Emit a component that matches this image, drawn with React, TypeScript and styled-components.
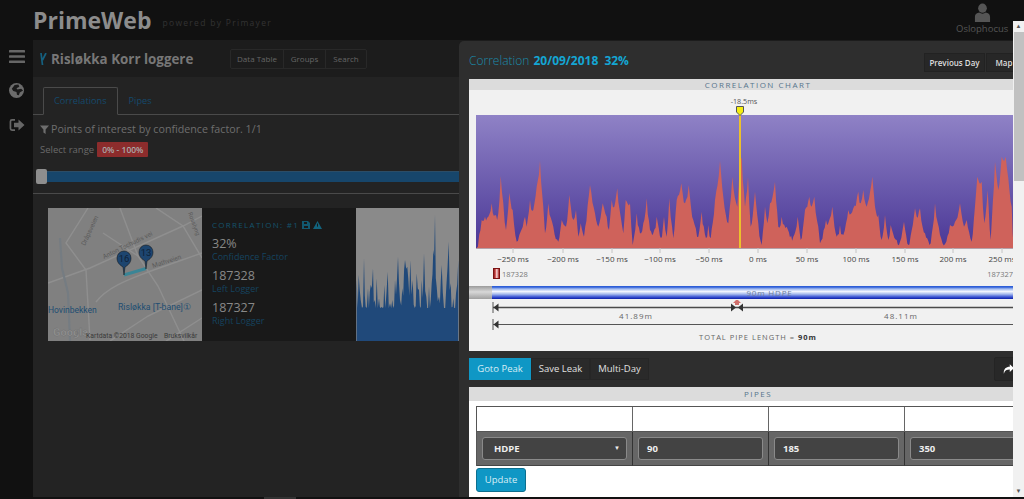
import React from "react";
import styled, { createGlobalStyle } from "styled-components";

const Global = createGlobalStyle`
  html, body { margin: 0; padding: 0; height: 100%; background: #111; overflow: hidden; }
  body { font-family: "Open Sans", "Liberation Sans", sans-serif; }
  * { box-sizing: border-box; }
`;

const Page = styled.div`
  position: relative;
  width: 1024px;
  height: 499px;
  overflow: hidden;
  display: grid;
  grid-template-columns: 33px 1fr;
  grid-template-rows: 40px 457px 2px;
  background: #111;
`;

const Header = styled.header`
  grid-column: 1 / 3;
  display: flex;
  align-items: flex-start;
  padding-left: 33px;
`;
const Brand = styled.div`
  font-size: 23px;
  font-weight: 700;
  line-height: 33px;
  height: 40px;
  padding-top: 4px;
  color: #8c8c8c;
`;
const Powered = styled.div`
  margin: 17px 0 0 11px;
  font-size: 8.5px;
  line-height: 12px;
  letter-spacing: 1.3px;
  color: #333;
`;
const UserBox = styled.div`
  margin-left: auto;
  width: 68px;
  display: flex;
  flex-direction: column;
  align-items: flex-start;
  padding: 3px 0 0 0;
  color: #555;
  font-size: 9.5px;
  line-height: 13px;
  svg { margin-left: 18px; }
`;

const Sidebar = styled.nav`
  display: flex;
  flex-direction: column;
  align-items: center;
  gap: 20px;
  padding-top: 10px;
  color: #666;
`;

const Main = styled.main`
  background: #232323;
  min-width: 0;
  overflow: hidden;
`;
const FootStrip = styled.div`
  grid-column: 1 / 3;
  padding-left: 264px;
`;
const FootTab = styled.div`
  width: 32px;
  height: 2px;
  background: #333;
`;
const TopBar = styled.div`
  height: 37px;
  background: #1c1c1c;
  display: flex;
  align-items: center;
  padding-left: 7px;
`;
const PageTitle = styled.h1`
  margin: 0;
  font-size: 13.4px;
  font-weight: 700;
  color: #777;
  display: flex;
  align-items: center;
  gap: 4px;
  width: 190px;
`;
const TopButtons = styled.div`
  display: flex;
  border: 1px solid #282828;
  border-radius: 2px;
`;
const TopButton = styled.div<{ $w: number }>`
  width: ${(p) => p.$w}px;
  text-align: center;
  font-size: 8px;
  line-height: 18px;
  color: #666;
  & + & { border-left: 1px solid #282828; }
`;
const Tabs = styled.div`
  margin-top: 10px;
  height: 28px;
  display: flex;
  padding-left: 10px;
  border-bottom: 1px solid #4a4a4a;
`;
const Tab = styled.div<{ $active?: boolean }>`
  height: 28px;
  padding: 0 10px 0 10px;
  font-size: 9.2px;
  line-height: 26px;
  color: #15496b;
  border: 1px solid ${(p) => (p.$active ? "#4a4a4a" : "transparent")};
  border-bottom-color: ${(p) => (p.$active ? "#232323" : "transparent")};
  border-radius: 2px 2px 0 0;
`;
const FilterLine = styled.div`
  margin: 6px 0 0 7px;
  display: flex;
  align-items: center;
  gap: 2px;
  color: #6e6e6e;
  font-size: 10.7px;
  line-height: 16px;
`;
const RangeLine = styled.div`
  margin: 5px 0 0 7px;
  display: flex;
  align-items: center;
  gap: 3px;
  color: #6a6a6a;
  font-size: 9.5px;
  line-height: 15px;
`;
const RangeBadge = styled.span`
  background: #8c2c2c;
  color: #aaa;
  font-size: 8.5px;
  font-weight: 600;
  padding: 0 5px;
  line-height: 15px;
  border-radius: 1px;
`;
const SliderTrack = styled.div`
  position: relative;
  margin: 14px 0 0 3px;
  height: 11px;
  background: #17466b;
  border-top: 1px solid #2c4d66;
`;
const SliderHandle = styled.div`
  position: absolute;
  left: 0;
  top: -3px;
  width: 11px;
  height: 15px;
  background: #8e8e8e;
  border-radius: 2px;
`;
const Rule = styled.div`
  margin-top: 11px;
  height: 1px;
  background: #4a4a4a;
`;
const Card = styled.section`
  margin: 14px 0 0 15px;
  height: 133px;
  display: flex;
  background: #191919;
  width: 500px;
`;
const MapBox = styled.div`
  width: 154px;
  flex: none;
  svg { display: block; }
`;
const Info = styled.div`
  width: 154px;
  flex: none;
  padding: 11px 0 0 10px;
`;
const InfoTitle = styled.div`
  display: flex;
  align-items: center;
  gap: 3px;
  font-size: 8px;
  line-height: 12px;
  letter-spacing: 1.3px;
  color: #15536b;
  margin-bottom: 4px;
`;
const Stat = styled.div`
  color: #888;
  font-size: 12.5px;
  line-height: 15px;
  padding-top: 1px;
`;
const StatLabel = styled.div`
  color: #15435f;
  font-size: 9px;
  line-height: 12px;
  margin-bottom: 4px;
`;
const Spectrum = styled.div`
  flex: none;
  width: 103px;
  height: 133px;
  svg { display: block; }
`;

const Overlay = styled.aside`
  position: absolute;
  left: 459px;
  right: 0;
  top: 21px;
  bottom: 2px;
  display: flex;
`;
const Modal = styled.div`
  flex: 1;
  min-width: 0;
  margin-top: 20px;
  background: #2e2e2e;
  border-radius: 5px 0 0 0;
  overflow: hidden;
`;
const ModalInner = styled.div`
  width: 588px;
  padding-left: 10px;
`;
const TitleRow = styled.div`
  height: 38px;
  display: flex;
  align-items: flex-start;
  padding-right: 25px;
`;
const ModalTitle = styled.h2`
  margin: 10px 0 0 0;
  font-size: 12px;
  line-height: 19px;
  font-weight: 300;
  color: #1a8cab;
  b { font-weight: 700; color: #14a6d4; margin-left: 1px; word-spacing: 3px; }
`;
const DarkGroup = styled.div`
  display: flex;
  margin-left: auto;
`;
const HeadButton = styled.button<{ $w: number }>`
  width: ${(p) => p.$w}px;
  height: 19px;
  margin-top: 12px;
  padding: 0;
  background: #272727;
  border: 1px solid #222;
  color: #ddd;
  font: 600 8px/17px "Open Sans", sans-serif;
  & + & { margin-left: 1px; }
`;
const WhitePanel = styled.section`
  background: #f1f1f1;
  width: 578px;
  height: 272px;
`;
const SectionHead = styled.div<{ $tall?: boolean }>`
  height: ${(p) => (p.$tall ? "14px" : "11px")};
  background: #dcdcdc;
  text-align: center;
  font-size: 8px;
  line-height: ${(p) => (p.$tall ? "14px" : "12px")};
  letter-spacing: 1.5px;
  color: #56748c;
`;
const ChartSvg = styled.svg`
  display: block;
`;
const LoggerRow = styled.div`
  height: 13px;
  margin-top: 1px;
  display: flex;
  align-items: center;
  justify-content: space-between;
  padding: 0 34px 0 24px;
  font-size: 7.5px;
  color: #777;
`;
const LoggerLeft = styled.span`
  display: flex;
  align-items: center;
  gap: 2px;
`;
const LoggerBattery = styled.i`
  display: block;
  width: 7px;
  height: 11px;
  background: linear-gradient(90deg, #8e1a1a, #e06a6a 35%, #f6dede 55%, #a52020);
  border: 1px solid #7a1212;
`;
const PipeBar = styled.div`
  margin-top: 6px;
  height: 13px;
  display: flex;
`;
const PipeCap = styled.div`
  width: 23px;
  background: linear-gradient(180deg, #9a9a9a, #d8d8d8 45%, #a0a0a0);
`;
const PipeBody = styled.div`
  flex: 1;
  background: linear-gradient(180deg, #2d5ed8 0, #2d5ed8 8%, #9cb6ee 22%, #f2f5fd 42%, #a8bcee 62%, #3b55d4 84%, #0c1fa8 100%);
  text-align: center;
  font-size: 8px;
  line-height: 13px;
  letter-spacing: 0.8px;
  color: #6d7e9c;
`;
const DimensionSvg = styled.svg`
  display: block;
  margin-top: 1px;
`;
const TotalLine = styled.div`
  text-align: center;
  font-size: 7.5px;
  line-height: 12px;
  letter-spacing: 1px;
  color: #666;
  b { font-weight: 700; color: #333; }
`;
const ActionRow = styled.div`
  height: 36px;
  display: flex;
  align-items: flex-start;
  padding-top: 7px;
  width: 578px;
`;
const ActionButton = styled.button<{ $primary?: boolean }>`
  height: 22px;
  padding: 0;
  width: ${(p) => (p.$primary ? 62 : 59)}px;
  background: ${(p) => (p.$primary ? "#0f97c5" : "#2a2a2a")};
  border: 1px solid ${(p) => (p.$primary ? "#0f97c5" : "#262626")};
  color: ${(p) => (p.$primary ? "#d8eef6" : "#e0e0e0")};
  font: 400 9.5px/20px "Open Sans", sans-serif;
`;
const ShareButton = styled.button`
  margin-left: auto;
  margin-right: 27px;
  width: 26px;
  height: 24px;
  margin-top: -1px;
  background: #282828;
  border: 1px solid #242424;
  border-radius: 2px;
  color: #fff;
  padding: 0 0 0 8px;
  text-align: left;
  svg { display: block; }
`;
const PipesPanel = styled.section`
  background: #fff;
  width: 578px;
  height: 110px;
`;
const PipesBody = styled.div`
  padding: 5px 7px 0;
`;
const PipeTable = styled.div`
  display: grid;
  grid-template-columns: 156px 136px 136px 136px;
  grid-template-rows: 25px 34px;
  border-top: 1px solid #555;
  border-left: 1px solid #555;
  width: 564px;
`;
const HeadCell = styled.div`
  background: #fff;
  border-right: 1px solid #666;
  border-bottom: 1px solid #555;
`;
const BodyCell = styled.div`
  background: #666;
  border-right: 1px solid #333;
  border-bottom: 1px solid #444;
  padding: 5px 5px 0;
`;
const FieldBox = styled.div`
  height: 23px;
  background: #434343;
  border: 1px solid #8a8a8a;
  border-radius: 3px;
  color: #eee;
  font-size: 9.5px;
  font-weight: 700;
  line-height: 21px;
  padding-left: 8px;
`;
const SelectBox = styled(FieldBox)`
  display: flex;
  justify-content: space-between;
  padding: 0 6px 0 11px;
  span { font-size: 6px; }
`;
const UpdateButton = styled.button`
  display: block;
  margin-top: 2px;
  width: 50px;
  height: 24px;
  padding: 0;
  background: #0f97c5;
  border: 1px solid #0c6f8f;
  border-radius: 3px;
  color: #d6eef6;
  font: 400 9.5px/22px "Open Sans", sans-serif;
`;
const Scrollbar = styled.div`
  flex: none;
  width: 11px;
  background: #f1f1f1;
  display: flex;
  flex-direction: column;
  align-items: center;
  color: #555;
  font-size: 6px;
  line-height: 11px;
`;
const ScrollThumb = styled.div`
  width: 10px;
  height: 149px;
  background: #c1c1c1;
  margin-bottom: auto;
`;
const Spacer = styled.div`
  height: 11px;
`;

/* Peak outlines traced from the correlation chart. */
const LEFT: number[][] = [[50,385],[65,300],[75,290],[85,290],[95,250],[105,285],[115,280],[122,168],[130,250],[138,330],[148,218],[158,270],[170,365],[178,345],[195,290],[200,320],[210,240],[220,270],[240,122],[250,260],[255,340],[265,250],[280,320],[295,365],[305,300],[318,320],[328,225],[340,300],[348,270],[355,350],[362,310],[372,350],[390,195],[405,280],[415,320],[428,250],[440,290],[447,330],[455,240],[463,260],[472,205],[482,290],[490,340],[497,240],[510,250],[518,375],[530,280],[540,340],[550,310],[560,235],[570,330],[580,340],[590,290],[603,355],[612,290],[620,350],[628,235],[640,355],[650,240],[664,190],[675,250],[686,195],[700,300],[715,350],[725,275],[738,355],[745,315],[752,355],[765,240],[780,122],[790,230],[805,310],[817,170],[832,260],[840,115]];
const RIGHT: number[][] = [[5,115],[15,260],[24,170],[32,320],[45,215],[55,310],[65,375],[75,260],[82,310],[90,250],[105,185],[115,320],[125,290],[140,320],[160,350],[173,290],[182,360],[195,270],[208,230],[215,260],[223,230],[235,320],[240,370],[258,300],[265,310],[277,260],[290,350],[300,315],[310,345],[318,310],[325,270],[340,265],[355,215],[362,250],[370,210],[380,260],[397,170],[405,260],[415,285],[425,360],[435,285],[445,360],[452,315],[470,360],[480,365],[492,305],[505,375],[525,265],[530,290],[540,265],[555,340],[572,370],[585,250],[600,345],[615,372],[630,315],[645,305],[660,250],[672,320],[680,300],[695,365],[712,170],[725,185],[733,310],[743,210],[752,360],[765,125],[775,210],[785,110],[797,110],[805,175],[815,260],[821,385]];
const SPEC: number[][] = [[470,240],[476,225],[482,300],[486,350],[492,175],[497,320],[504,265],[512,255],[519,205],[524,300],[530,235],[537,295],[545,320],[553,255],[563,215],[570,310],[577,300],[585,240],[594,170],[600,300],[607,265],[615,180],[622,200],[631,180],[638,240],[644,330],[650,220],[657,270],[665,240],[672,160],[679,290],[687,260],[695,250],[700,150],[705,45],[710,260],[717,290],[725,195],[732,335],[739,260],[746,125],[752,250],[760,295],[768,280],[775,180]];

const noise = (i: number) => {
  const v = Math.sin(i * 12.9898) * 43758.5453;
  return v - Math.floor(v);
};

/* Subdivide an outline and push it towards the base by a repeatable amount, for the fine jagged edge. */
const jag = (pts: number[][], step: number, amp: number, floor: number) => {
  const out: number[][] = [];
  let n = 0;
  for (let i = 0; i < pts.length - 1; i++) {
    const [x0, y0] = pts[i];
    const [x1, y1] = pts[i + 1];
    const count = Math.max(1, Math.round((x1 - x0) / step));
    for (let k = 0; k < count; k++) {
      const t = k / count;
      const y = y0 + (y1 - y0) * t;
      const drop = k === 0 ? 0 : amp * noise(++n);
      out.push([x0 + (x1 - x0) * t, Math.min(floor, y + drop)]);
    }
  }
  out.push(pts[pts.length - 1]);
  return out;
};
const fmt = (pts: number[][]) => pts.map(([x, y]) => `${x.toFixed(1)},${y.toFixed(1)}`).join(" ");

const chartPoints = fmt(
  jag(
    [
      ...LEFT.map(([x, y]) => [460 + x / 3 - 469, 120 + y / 3 - 90]),
      ...RIGHT.map(([x, y]) => [740 + x / 3 - 469, 120 + y / 3 - 90]),
    ],
    1.2,
    6,
    158
  )
);

const specPoints = fmt([
  ...jag(SPEC.map(([x, y]) => [(x - 468) / 3, (y - 24) / 3]), 1, 34, 100),
  [102.3, 133],
  [0.6, 133],
]);

const TICKS = [
  ["\u2212250 ms", 44], ["\u2212200 ms", 94], ["\u2212150 ms", 143], ["\u2212100 ms", 191], ["\u221250 ms", 240],
  ["0 ms", 289], ["50 ms", 338], ["100 ms", 387], ["150 ms", 436], ["200 ms", 484], ["250 ms", 533],
] as const;

const Pin = ({ x, y, n }: { x: number; y: number; n: string }) => (
  <g transform={`translate(${x} ${y})`}>
    <path d="M0 0 L-1 -8 C-6 -11 -7 -14 -7 -17 A7 7 0 0 1 7 -17 C7 -14 6 -11 1 -8 Z" fill="#1d456f" stroke="#111" strokeWidth="0.5" />
    <text x="0" y="-13" textAnchor="middle" fontSize="9.5" fill="#0f2238">{n}</text>
  </g>
);

const MapDrawing = () => (
  <svg width="154" height="133" viewBox="0 0 154 133" fontFamily="Roboto, sans-serif">
    <rect width="154" height="133" fill="#808080" />
    <g fill="none" stroke="#8f8f8f" strokeWidth="1.4">
      <path d="M0 75 L42 60 L135 18 L154 8" />
      <path d="M40 0 L18 35 L38 62 L42 132" />
      <path d="M72 0 L90 48 L110 78 L136 133" />
      <path d="M48 94 C60 78 85 70 100 64 L154 45" />
      <path d="M62 133 L100 108 L154 82" />
      <path d="M118 133 L154 110" />
      <path d="M108 0 L135 18 L154 50" />
      <path d="M55 25 L90 48" />
    </g>
    <path d="M12 30 L14 60 L20 85 L22 133" fill="none" stroke="#757c82" strokeWidth="2.2" />
    <path d="M76 67 L98 60.5" stroke="#3a8596" strokeWidth="3" />
    <text fontSize="6.5" fill="#5b5b5b" transform="translate(37 38) rotate(-65)">Dr&#229;psveien</text>
    <text fontSize="6.5" fill="#5b5b5b" transform="translate(56 51) rotate(-26)">Anton Tschudis vei</text>
    <text fontSize="6.5" fill="#5b5b5b" transform="translate(105 60) rotate(-18)">Mathveien</text>
    <text fontSize="6" fill="#5b5b5b" transform="translate(140 5) rotate(70)">Rosslyng</text>
    <Pin x={76} y={67} n="16" />
    <Pin x={98} y={61} n="13" />
    <text x="0" y="105" fontSize="8.5" fill="#1d4d72">Hovinbekken</text>
    <text x="70" y="102" fontSize="8.7" fill="#1d4d72">Risl&#248;kka [T-bane]&#9312;</text>
    <text x="5" y="128" fontSize="11" fontWeight="700" fill="#949494" stroke="#6e6e6e" strokeWidth="0.4">Google</text>
    <text x="38" y="130" fontSize="6.8" fill="#3a3a3a">Kartdata &#169;2018 Google</text>
    <text x="116" y="130" fontSize="6.8" fill="#3a3a3a">Bruksvilk&#229;r</text>
  </svg>
);

const MenuIcon = () => (
  <svg width="16" height="13" viewBox="0 0 16 13" fill="currentColor"><rect y="0" width="16" height="2.6" rx=".6" /><rect y="5.2" width="16" height="2.6" rx=".6" /><rect y="10.4" width="16" height="2.6" rx=".6" /></svg>
);
const GlobeIcon = () => (
  <svg width="15" height="15" viewBox="0 0 16 16">
    <circle cx="8" cy="8" r="8" fill="#6c6c6c" />
    <path d="M6 2 L10 1.5 L11 4 L8 5.5 L9 7 L13 6 L15 8 L11.5 10 L10.5 13 L8.5 12.5 L8 9.5 L4.5 8.5 L3 6 Z" fill="#1a1a1a" />
  </svg>
);
const ExitIcon = () => (
  <svg width="16" height="14" viewBox="0 0 16 14" fill="currentColor">
    <path d="M6 1 H3 A2.4 2.4 0 0 0 .6 3.4 V10.6 A2.4 2.4 0 0 0 3 13 H6 V11.3 H3 A.8 .8 0 0 1 2.3 10.5 V3.5 A.8 .8 0 0 1 3 2.7 H6 Z" />
    <path d="M9.5 1.5 L15.5 7 L9.5 12.5 V9.3 H5 V4.7 H9.5 Z" />
  </svg>
);
const UserIcon = () => (
  <svg width="17" height="19" viewBox="0 0 18 19" fill="#555" preserveAspectRatio="none">
    <circle cx="9" cy="5.2" r="4.6" />
    <path d="M1 19 V14 C1 11 3.5 9.8 5.5 9.5 C7.5 11 10.5 11 12.5 9.5 C14.5 9.8 17 11 17 14 V19 Z" />
  </svg>
);
const FilterIcon = () => (
  <svg width="9" height="9" viewBox="0 0 9 9" fill="#6e6e6e"><path d="M0 .5 H9 L5.6 4.4 V9 L3.4 7.5 V4.4 Z" /></svg>
);
const Valve = () => (
  <svg width="7" height="12" viewBox="0 0 7 12" fill="none" stroke="#15607f" strokeWidth="1.7"><path d="M1 0 L2.5 12 M6 0 L2.5 7" /></svg>
);
const SaveIcon = () => (
  <svg width="8" height="8" viewBox="0 0 8 8" fill="#12586f"><path d="M0 0 H6 L8 2 V8 H0 Z M2 1 V3 H5 V1 Z M2 5 V7 H6 V5 Z" fillRule="evenodd" /></svg>
);
const WarnIcon = () => (
  <svg width="9" height="8" viewBox="0 0 9 8"><path d="M4.5 0 L9 8 H0 Z" fill="#12637d" /><rect x="4" y="2.6" width="1" height="3" fill="#191919" /></svg>
);
const ShareIcon = () => (
  <svg width="11" height="10" viewBox="0 0 13 11" fill="#fff"><path d="M8 0 L13 4.5 L8 9 V6.2 C4.5 6.2 2.2 7.2 1 11 C0.4 6 3 2.9 8 2.8 Z" /></svg>
);

const Arrow = ({ x, dir, y = 7.5 }: { x: number; dir: 1 | -1; y?: number }) => (
  <path d={`M${x} ${y} L${x + dir * 5} ${y - 4} V${y + 4} Z`} fill="#333" />
);

export default function App() {
  return (
    <Page>
      <Global />
      <Header>
        <Brand>PrimeWeb</Brand>
        <Powered>powered by Primayer</Powered>
        <UserBox>
          <UserIcon />
          <span>Oslophocus</span>
        </UserBox>
      </Header>
      <Sidebar>
        <MenuIcon />
        <GlobeIcon />
        <ExitIcon />
      </Sidebar>
      <Main>
        <TopBar>
          <PageTitle><Valve /> Risl&#248;kka Korr loggere</PageTitle>
          <TopButtons>
            <TopButton $w={52}>Data Table</TopButton>
            <TopButton $w={42}>Groups</TopButton>
            <TopButton $w={41}>Search</TopButton>
          </TopButtons>
        </TopBar>
        <Tabs>
          <Tab $active>Correlations</Tab>
          <Tab>Pipes</Tab>
        </Tabs>
        <FilterLine><FilterIcon /> Points of interest by confidence factor. 1/1</FilterLine>
        <RangeLine>Select range <RangeBadge>0% - 100%</RangeBadge></RangeLine>
        <SliderTrack><SliderHandle /></SliderTrack>
        <Rule />
        <Card>
          <MapBox><MapDrawing /></MapBox>
          <Info>
            <InfoTitle>CORRELATION: #1 <SaveIcon /> <WarnIcon /></InfoTitle>
            <Stat>32%</Stat>
            <StatLabel>Confidence Factor</StatLabel>
            <Stat>187328</Stat>
            <StatLabel>Left Logger</StatLabel>
            <Stat>187327</Stat>
            <StatLabel>Right Logger</StatLabel>
          </Info>
          <Spectrum>
            <svg width="103" height="133" viewBox="0 0 103 133">
              <rect width="103" height="133" fill="#8a8a8a" />
              <polygon points={specPoints} fill="#20497a" />
            </svg>
          </Spectrum>
        </Card>
      </Main>
      <FootStrip><FootTab /></FootStrip>

      <Overlay>
        <Modal>
          <ModalInner>
            <TitleRow>
              <ModalTitle>Correlation <b>20/09/2018 32%</b></ModalTitle>
              <DarkGroup>
                <HeadButton $w={61}>Previous Day</HeadButton>
                <HeadButton $w={36}>Map</HeadButton>
              </DarkGroup>
            </TitleRow>
            <WhitePanel>
              <SectionHead>CORRELATION CHART</SectionHead>
              <ChartSvg width="578" height="176" viewBox="0 0 578 176" fontFamily="Open Sans, sans-serif">
                <defs>
                  <linearGradient id="bg" x1="0" y1="0" x2="0" y2="1">
                    <stop offset="0" stopColor="#8f82c6" />
                    <stop offset="1" stopColor="#4a3796" />
                  </linearGradient>
                </defs>
                <rect x="7" y="25" width="571" height="133" fill="url(#bg)" />
                <polygon points={chartPoints} fill="#cf625b" />
                <line x1="7" y1="158.5" x2="578" y2="158.5" stroke="#b5a0a8" />
                <line x1="271" y1="25" x2="271" y2="158" stroke="#ecc02c" strokeWidth="2" />
                <path d="M267.5 16.5 H274.5 V22 L271 25.5 L267.5 22 Z" fill="#f5ee10" stroke="#555" strokeWidth="1" />
                <text x="275" y="14" textAnchor="middle" fontSize="7.2" fill="#555">-18.5ms</text>
                {TICKS.map(([label, x]) => (
                  <g key={label}>
                    <line x1={x} y1="158" x2={x} y2="163" stroke="#c4c4c4" />
                    <text x={x} y="172" textAnchor="middle" fontSize="8" fill="#444">{label}</text>
                  </g>
                ))}
              </ChartSvg>
              <LoggerRow>
                <LoggerLeft><LoggerBattery />187328</LoggerLeft>
                <span>187327</span>
              </LoggerRow>
              <PipeBar>
                <PipeCap />
                <PipeBody>90m HDPE</PipeBody>
              </PipeBar>
              <DimensionSvg width="578" height="31" viewBox="0 0 578 31" fontFamily="Open Sans, sans-serif">
                <line x1="24" y1="2" x2="24" y2="13" stroke="#555" />
                <line x1="24" y1="7.5" x2="544" y2="7.5" stroke="#4a4a4a" strokeWidth="1.6" />
                <Arrow x={24.5} dir={1} />
                <Arrow x={267} dir={-1} />
                <Arrow x={269} dir={1} />
                <path d="M268 -1 L272 3 H270 V5 H266 V3 H264 Z" fill="#d0706c" />
                <text x="167" y="19" textAnchor="middle" fontSize="8" letterSpacing="1" fill="#666">41.89m</text>
                <text x="432" y="19" textAnchor="middle" fontSize="8" letterSpacing="1" fill="#666">48.11m</text>
                <line x1="24" y1="19" x2="24" y2="30" stroke="#555" />
                <line x1="24" y1="24.5" x2="544" y2="24.5" stroke="#555" />
                <Arrow x={24.5} dir={1} y={24.5} />
              </DimensionSvg>
              <TotalLine>TOTAL PIPE LENGTH = <b>90m</b></TotalLine>
            </WhitePanel>
            <ActionRow>
              <ActionButton $primary>Goto Peak</ActionButton>
              <ActionButton>Save Leak</ActionButton>
              <ActionButton>Multi-Day</ActionButton>
              <ShareButton><ShareIcon /></ShareButton>
            </ActionRow>
            <PipesPanel>
              <SectionHead $tall>PIPES</SectionHead>
              <PipesBody>
                <PipeTable>
                  <HeadCell /><HeadCell /><HeadCell /><HeadCell />
                  <BodyCell><SelectBox>HDPE <span>&#9660;</span></SelectBox></BodyCell>
                  <BodyCell><FieldBox>90</FieldBox></BodyCell>
                  <BodyCell><FieldBox>185</FieldBox></BodyCell>
                  <BodyCell><FieldBox>350</FieldBox></BodyCell>
                </PipeTable>
                <UpdateButton>Update</UpdateButton>
              </PipesBody>
            </PipesPanel>
          </ModalInner>
        </Modal>
        <Scrollbar>
          <Spacer>&#9650;</Spacer>
          <ScrollThumb />
          <Spacer>&#9660;</Spacer>
        </Scrollbar>
      </Overlay>
    </Page>
  );
}
